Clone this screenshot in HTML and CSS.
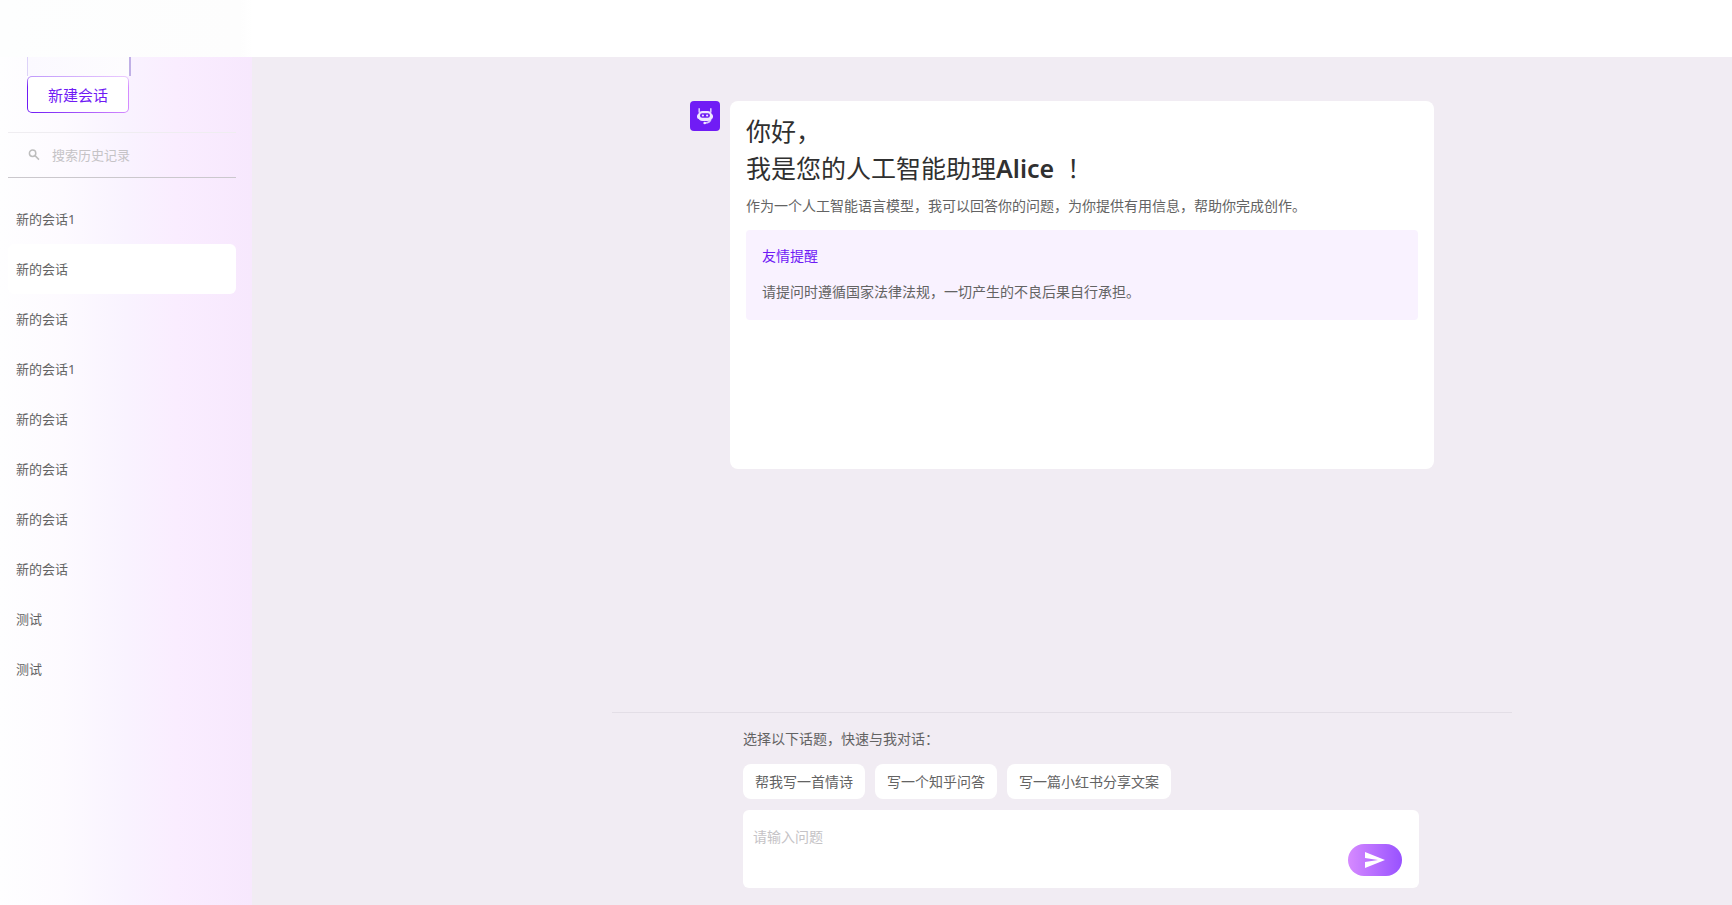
FILE: index.html
```html
<!DOCTYPE html>
<html lang="zh-CN">
<head>
<meta charset="utf-8">
<title>Alice</title>
<link rel="stylesheet" href="styles.css">
</head>
<body>
<header class="topbar"></header>
<div class="layout">
  <aside class="sidebar">
    <div class="actions">
      <div class="ghost"></div>
      <button class="new-chat" type="button"><span>新建会话</span></button>
    </div>
    <label class="search">
      <svg class="search-icon" viewBox="0 0 12 12" aria-hidden="true"><circle cx="4.6" cy="4.2" r="3.2"/><path d="M7 6.6l4 4"/></svg>
      <input type="search" placeholder="搜索历史记录" aria-label="搜索历史记录">
    </label>
    <nav class="history">
      <a href="#">新的会话1</a>
      <a href="#" class="active">新的会话</a>
      <a href="#">新的会话</a>
      <a href="#">新的会话1</a>
      <a href="#">新的会话</a>
      <a href="#">新的会话</a>
      <a href="#">新的会话</a>
      <a href="#">新的会话</a>
      <a href="#">测试</a>
      <a href="#">测试</a>
    </nav>
  </aside>
  <main class="main">
    <section class="message">
      <div class="avatar">
        <svg viewBox="0 0 18 18" aria-hidden="true">
          <path class="line" d="M3.2 1.2v4M14.8 1.2v4M15 11.5c-.5 3-2.5 4.3-6 4.5"/>
          <rect class="fill" x="1" y="7" width="16" height="5" rx="2"/>
          <rect class="fill" x="2" y="4" width="14" height="10" rx="4.5"/>
          <rect class="hole" x="4" y="6.2" width="10" height="4.6" rx="2.2"/>
          <circle class="fill" cx="6.9" cy="8.5" r="1.1"/><circle class="fill" cx="11.1" cy="8.5" r="1.1"/>
          <circle class="fill" cx="8.7" cy="16" r="1.3"/>
        </svg>
      </div>
      <article class="card">
        <h1>你好，<br>我是您的人工智能助理<span class="name">Alice</span> <span class="mark" lang="zh-TW">！</span></h1>
        <p class="intro">作为一个人工智能语言模型，我可以回答你的问题，为你提供有用信息，帮助你完成创作。</p>
        <div class="notice">
          <h2>友情提醒</h2>
          <p>请提问时遵循国家法律法规，一切产生的不良后果自行承担。</p>
        </div>
      </article>
    </section>
    <section class="composer">
      <div class="composer-inner">
        <p class="hint">选择以下话题，快速与我对话：</p>
        <div class="chips">
          <button type="button">帮我写一首情诗</button>
          <button type="button">写一个知乎问答</button>
          <button type="button">写一篇小红书分享文案</button>
        </div>
        <form class="ask">
          <textarea placeholder="请输入问题" aria-label="请输入问题"></textarea>
          <button class="send" type="button" aria-label="发送">
            <svg viewBox="0 0 20 16" aria-hidden="true"><path d="M0 0L20 8L0 16V10L13 8L0 6z"/></svg>
          </button>
        </form>
      </div>
    </section>
  </main>
</div>
</body>
</html>
```
FILE: styles.css
```css
* { box-sizing: border-box; }

body {
  margin: 0;
  height: 100vh;
  display: flex;
  flex-direction: column;
  background: #f1ecf3;
  color: #636363;
  font: 14px/20px "Noto Sans", "Noto Sans CJK SC", sans-serif;
}

h1, h2, p { margin: 0; font-weight: 400; }
button, input, textarea { font: inherit; border: 0; outline: 0; }
button { cursor: pointer; }

.topbar {
  flex: none;
  height: 57px;
  background: linear-gradient(90deg, #fdfefe, #fdfdfd 240px, #fff 252px);
}

.layout { flex: 1; display: flex; min-height: 0; }

.sidebar {
  flex: none;
  width: 252px;
  padding: 0 16px 0 8px;
  background: linear-gradient(90deg, #fefeff 0%, #fdfaff 25%, #f9f3ff 50%, #faedff 70%, #f7e8fd 100%);
}

.actions {
  height: 76px;
  padding: 0 19px 19px;
  border-bottom: 1px solid #efedf1;
}

.ghost {
  width: 104px;
  height: 19px;
  border: solid #ddd3f8;
  border-width: 0 2px 0 1px;
  border-right-color: #c0b0e6;
  background: linear-gradient(90deg, #fbf9ff, #fdfcfe);
}

.new-chat {
  display: block;
  width: 102px;
  height: 37px;
  padding: 1px;
  border-radius: 5px;
  background:
    linear-gradient(180deg, #fbf8ff99, #fbf8ff00 30%),
    linear-gradient(90deg, #6f1af5, #d58cff);
  color: #6f1af5;
  font-size: 15px;
}

.new-chat span {
  display: grid;
  place-items: center;
  height: 100%;
  border-radius: 4px;
  background: #fff;
}

.search {
  display: flex;
  align-items: center;
  gap: 12px;
  height: 45px;
  padding: 0 20px;
  border-bottom: 1px solid #cbc8cd;
}

.search-icon {
  flex: none;
  width: 12px;
  height: 12px;
  fill: none;
  stroke: #bdbdbd;
  stroke-width: 1.5;
}

.search input {
  flex: 1;
  min-width: 0;
  padding: 0;
  background: none;
  font-size: 13px;
}

::placeholder { color: #c5c3c6; opacity: 1; }

.history { display: flex; flex-direction: column; padding-top: 16px; }

.history a {
  height: 50px;
  padding: 0 8px;
  border-radius: 6px;
  color: #636363;
  font-size: 13px;
  line-height: 50px;
  text-decoration: none;
}

.history .active { background: #fff; }

.main {
  flex: 1;
  min-width: 0;
  display: flex;
  flex-direction: column;
  justify-content: space-between;
  align-items: center;
  padding: 44px 0 17px 140px;
}

.message {
  display: flex;
  align-items: flex-start;
  gap: 10px;
  width: 100%;
  max-width: 744px;
}

.avatar {
  flex: none;
  display: grid;
  place-items: center;
  width: 30px;
  height: 30px;
  border-radius: 4px;
  background: #701cf5;
}

.avatar svg { width: 18px; height: 18px; }
.avatar .fill { fill: #f0e7ff; }
.avatar .hole { fill: #701cf5; }
.avatar .line { fill: none; stroke: #d9c4ff; stroke-width: 1.6; }

.card {
  flex: 1;
  min-height: 368px;
  padding: 12px 16px;
  border-radius: 8px;
  background: #fff;
}

.card h1 { color: #303030; font-size: 25px; line-height: 37px; }
.name { font-weight: 600; }
.mark { font-family: "Noto Sans", "Noto Sans CJK TC", sans-serif; }
.intro { margin: 9px 0 14px; }

.notice {
  display: grid;
  gap: 16px;
  padding: 16px 16px 18px;
  border-radius: 4px;
  background: #f9f2ff;
}

.notice h2 { color: #6f1af5; font-size: 14px; line-height: 20px; }

.composer {
  width: 100%;
  max-width: 900px;
  padding-top: 16px;
  border-top: 1px solid #e3dee6;
}

.composer-inner { max-width: 714px; margin: 0 auto; padding-left: 38px; }

.chips { display: flex; gap: 10px; padding: 15px 0 11px; }

.chips button {
  height: 35px;
  padding: 0 12px;
  border-radius: 8px;
  background: #fff;
  color: #636363;
}

.ask {
  display: flex;
  align-items: flex-end;
  height: 78px;
  padding: 0 17px 12px 10px;
  border-radius: 6px;
  background: #fff;
}

.ask textarea {
  flex: 1;
  align-self: stretch;
  padding: 17px 0 0;
  background: none;
  resize: none;
}

.send {
  display: grid;
  place-items: center;
  width: 54px;
  height: 32px;
  padding: 0;
  border-radius: 16px;
  background: linear-gradient(90deg, #d68aff, #9852ff);
}

.send svg { width: 20px; height: 16px; fill: #fff; }
```
